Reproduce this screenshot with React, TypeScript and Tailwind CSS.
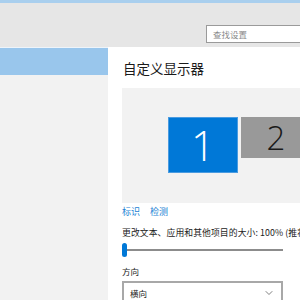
import { ChevronDown } from "lucide-react";

const font = { fontFamily: '"Noto Sans CJK SC", "Noto Sans", sans-serif' };

function Monitor({ n, active }: { n: string; active?: boolean }) {
  return active ? (
    <div className="w-[70px] h-[56px] bg-[#0078d7] border border-[#4a9be0] flex items-center justify-center shrink-0">
      <span className="text-white text-[42px] font-extralight leading-none" style={{ fontFamily: '"Open Sans", "Liberation Sans", sans-serif' }}>
        {n}
      </span>
    </div>
  ) : (
    <div className="w-[70px] h-[41px] bg-[#999999] flex items-center justify-center shrink-0">
      <span className="text-[#1a1a1a] text-[33px] font-light leading-none" style={{ fontFamily: '"Open Sans", "Liberation Sans", sans-serif' }}>
        {n}
      </span>
    </div>
  );
}

export default function App() {
  return (
    <div className="w-[300px] h-[300px] overflow-hidden bg-white flex flex-col" style={font}>
      <div className="h-[47px] shrink-0 bg-[#e6e6e6] border-t-[3px] border-[#a9cfee] pt-[22px] pl-[206px]">
        <div className="w-[110px] h-[18px] bg-white border border-[#9a9a9a] flex items-center pl-[6px]">
          <span className="text-[8.5px] text-[#8a8a8a] leading-none">查找设置</span>
        </div>
      </div>

      <div className="flex flex-1 min-h-0">
        <div className="w-[108px] shrink-0 bg-[#f2f2f2]">
          <div className="h-[28px] bg-[#99c6ec] border-t border-[#eef4fa]" />
        </div>

        <div className="flex-1 pl-[14px] pt-[11px]">
          <h1 className="text-[13.5px] leading-[20px] text-[#1a1a1a] pl-px">自定义显示器</h1>

          <div className="mt-[10px] h-[115px] bg-[#f2f2f2] flex items-start gap-[3px] pl-[46px] pt-[29px]">
            <Monitor n="1" active />
            <Monitor n="2" />
          </div>

          <div className="mt-[2px] flex gap-[10px] text-[9px] leading-[14px] text-[#1a7fd4]">
            <span>标识</span>
            <span>检测</span>
          </div>

          <p className="mt-[7px] text-[8.8px] leading-[14px] text-[#222] whitespace-nowrap tracking-[0.1px]">
            更改文本、应用和其他项目的大小: 100% (推荐)
          </p>

          <div className="mt-[3px] w-[161px] h-[14px] flex items-center">
            <div className="w-[5px] h-[14px] rounded-full bg-[#0078d7] shrink-0" />
            <div className="flex-1 h-[2px] bg-[#8c8c8c]" />
          </div>

          <p className="mt-[7px] text-[8.5px] leading-[14px] text-[#222]">方向</p>

          <div className="mt-[3px] w-[161px] h-[24px] border-2 border-[#a8a8a8] bg-white flex items-center justify-between pl-[6px] pr-[6px]">
            <span className="text-[8.5px] text-[#222]">横向</span>
            <ChevronDown size={12} strokeWidth={1.5} className="text-[#555]" />
          </div>
        </div>
      </div>
    </div>
  );
}
